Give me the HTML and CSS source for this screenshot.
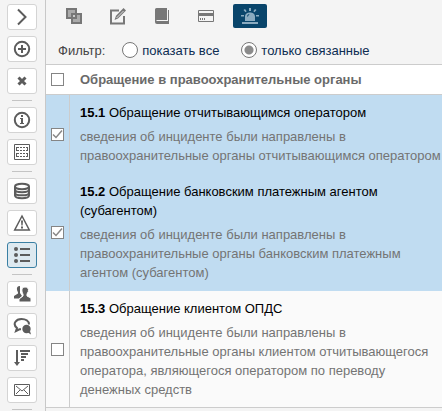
FILE: index.html
```html
<!DOCTYPE html>
<html lang="ru">
<head>
<meta charset="utf-8">
<title>Обращение в правоохранительные органы</title>
<link rel="stylesheet" href="styles.css">
</head>
<body>
<div class="app">
  <nav class="sidebar" aria-label="Разделы">
    <button class="side-btn" type="button" aria-label="Развернуть"><svg width="18" height="18" viewBox="0 0 18 18"><path class="line" d="M5 1.500l7.500 7.500L5 16.500"/></svg></button>
    <button class="side-btn" type="button" aria-label="Добавить"><svg width="18" height="18" viewBox="0 0 18 18"><circle class="line" cx="9" cy="9" r="7.200"/><path class="line" d="M9 5v8M5 9h8"/></svg></button>
    <button class="side-btn" type="button" aria-label="Удалить"><svg width="18" height="18" viewBox="0 0 18 18"><path class="line bold" d="M5.500 5.500l7 7M12.500 5.500l-7 7"/></svg></button>
    <hr class="rule">
    <button class="side-btn" type="button" aria-label="Информация"><svg width="18" height="18" viewBox="0 0 18 18"><circle class="line" cx="9" cy="9" r="7.200"/><path d="M8 4h2v2H8zM7 7h3v5h1v1H7v-1h1V8H7z"/></svg></button>
    <button class="side-btn" type="button" aria-label="Бланк"><svg width="18" height="18" viewBox="0 0 18 18"><path class="line thin" d="M1.500 1.500h15v15h-15z"/><path class="line thin" d="M3 4.500h3M7 4.500h2M10 4.500h2M13 4.500h2M3 7.500h3M7 7.500h2M10 7.500h2M13 7.500h2M3 10.500h3M7 10.500h2M10 10.500h2M13 10.500h2M3 13.500h3M7 13.500h2M10 13.500h2M13 13.500h2M3.500 4v4M14.500 4v4M3.500 10v4M14.500 10v4"/></svg></button>
    <hr class="rule">
    <button class="side-btn" type="button" aria-label="База данных"><svg width="18" height="18" viewBox="0 0 18 18"><ellipse class="line" cx="9" cy="4.500" rx="7" ry="2.700"/><path class="line" d="M2 4.500v9c0 3.500 14 3.500 14 0v-9M2 7.500c0 3.500 14 3.500 14 0M2 10.700c0 3.500 14 3.500 14 0"/></svg></button>
    <button class="side-btn" type="button" aria-label="Предупреждение"><svg width="18" height="18" viewBox="0 0 18 18"><path class="line medium" d="M9 2l7.300 14H1.700z"/><path d="M8 6.500h2l-.4 5H8.400zM8 12.500h2v2H8z"/></svg></button>
    <button class="side-btn side-btn-active" type="button" aria-label="Список"><svg width="18" height="18" viewBox="0 0 18 18"><circle cx="3" cy="3" r="2"/><circle cx="3" cy="9" r="2"/><circle cx="3" cy="15" r="2"/><path d="M7 2h10v2H7zM7 8h10v2H7zM7 14h10v2H7z"/></svg></button>
    <hr class="rule">
    <button class="side-btn" type="button" aria-label="Пользователи"><svg width="18" height="18" viewBox="0 0 18 18"><path d="M7 1C4.500 1 3.500 2.500 4 5l1 2.500v1L1 11v2.500h5l3-2.500-2-3V3z"/><path class="person" d="M12 2c2.500 0 4 1.500 3.300 4.500L14 9v2l4 2v4H6v-3l4-3V9C8.500 7 8 2 12 2z"/></svg></button>
    <button class="side-btn" type="button" aria-label="Сообщения"><svg width="18" height="18" viewBox="0 0 18 18"><path class="line" d="M8 12.300H6.500L3 14l1-3C-1 7 3 2 8.500 2c4 0 7.500 2 7.500 5.500"/><circle cx="13.500" cy="12" r="4.200"/><path d="M14 15l3-1 1 3.500z"/></svg></button>
    <button class="side-btn" type="button" aria-label="Сортировка"><svg width="18" height="18" viewBox="0 0 18 18"><path d="M3 1h2v12h2l-3 4-3-4h2zM7 1h10v2H7zM8 4h7v2H8zM8 7h5v2H8zM8 10h3v2H8z"/></svg></button>
    <button class="side-btn" type="button" aria-label="Почта"><svg width="18" height="18" viewBox="0 0 18 18"><path class="line thin" d="M1.500 3.500h15v11h-15zM3 5l6 5 6-5M3 13l4-4M15 13l-4-4"/></svg></button>
    <hr class="rule">
  </nav>
  <main class="content">
    <div class="toolbar">
      <button class="tool" type="button" aria-label="Копии"><svg width="18" height="18" viewBox="0 0 18 18"><path class="copy" d="M2 2h9v9H2z"/><path class="copy" d="M7 7h9v9H7z"/><path class="copy copy-mid" d="M7 7h4v4H7z"/></svg></button>
      <button class="tool" type="button" aria-label="Изменить"><svg width="18" height="18" viewBox="0 0 18 18"><path class="line" d="M10 3.500H2v13h13V9"/><path d="M14.500 1l2.500 2.500-8 8L5.500 13 7 8.800z"/><path class="glint" d="M7.500 11l7-7"/></svg></button>
      <button class="tool" type="button" aria-label="Справочник"><svg width="18" height="18" viewBox="0 0 18 18"><path d="M3.500 1H14v12H3.500v1H15V3h1v14H4Q2 17 2 15V2.500Q2 1 3.500 1z"/></svg></button>
      <button class="tool" type="button" aria-label="Карта"><svg width="18" height="18" viewBox="0 0 18 18"><path class="line thin" d="M1.500 3.500h15v11h-15z"/><path d="M1 6h16v3H1zM3 11h1v2H3zM5 11h1v2H5zM7 11h1v2H7z"/></svg></button>
      <button class="tool tool-active" type="button" aria-label="Тревога"><svg width="18" height="18" viewBox="0 0 18 18"><path d="M4 14V9.500C4 4 14 4 14 9.500V14zM1 15h16v2H1zM8 1h2v3H8zM2.500 3L4 2l1.700 2.200-1.200 1zM15.500 3L14 2l-1.700 2.200 1.200 1zM0 8h3v1.500H0zM15 8h3v1.500h-3z"/><path class="dark" d="M6 9.500q0-2 2-2.500l.4.800Q7 8.200 7 9.500z"/></svg></button>
    </div>
    <div class="filter" role="radiogroup" aria-labelledby="filter-name">
      <span class="filter-name" id="filter-name">Фильтр:</span>
      <label class="option"><input class="radio" type="radio" name="filter">показать все</label>
      <label class="option"><input class="radio" type="radio" name="filter" checked>только связанные</label>
    </div>
    <table class="list">
      <thead>
        <tr><th class="pick"><input class="check" type="checkbox" aria-label="Выбрать все"></th><th class="heading">Обращение в правоохранительные органы</th></tr>
      </thead>
      <tbody>
        <tr class="selected">
          <td class="pick"><input class="check" type="checkbox" id="item1" checked></td>
          <td class="item"><label class="title" for="item1"><b>15.1</b> Обращение отчитывающимся оператором</label>
            <p class="note">сведения об инциденте были направлены в правоохранительные органы отчитывающимся оператором</p></td>
        </tr>
        <tr class="selected">
          <td class="pick"><input class="check" type="checkbox" id="item2" checked></td>
          <td class="item"><label class="title" for="item2"><b>15.2</b> Обращение банковским платежным агентом (субагентом)</label>
            <p class="note">сведения об инциденте были направлены в правоохранительные органы банковским платежным агентом (субагентом)</p></td>
        </tr>
        <tr>
          <td class="pick"><input class="check" type="checkbox" id="item3"></td>
          <td class="item"><label class="title" for="item3"><b>15.3</b> Обращение клиентом ОПДС</label>
            <p class="note">сведения об инциденте были направлены в правоохранительные органы клиентом отчитывающегося оператора, являющегося оператором по переводу денежных средств</p></td>
        </tr>
      </tbody>
    </table>
  </main>
</div>
</body>
</html>
```
FILE: styles.css
```css
* { box-sizing: border-box; }
body {
  margin: 0;
  background: #f4f4f4;
  font: 13px/19px "Liberation Sans", Arial, sans-serif;
  color: #000;
}
.app { display: flex; min-height: 100vh; }
.sidebar {
  flex: none;
  display: flex;
  flex-direction: column;
  align-items: center;
  gap: 6px;
  width: 46px;
  padding: 4px 1px 0 0;
  border-right: 1px solid #c8c8c8;
}
.side-btn {
  display: flex;
  align-items: center;
  justify-content: center;
  width: 30px;
  height: 26px;
  padding: 0;
  border: 1px solid #d4d4d4;
  border-radius: 3px;
  background: #fff;
}
.side-btn-active { border-color: #3a7fa3; background: #dde9f0; }
.rule { width: 20px; margin: 0; border: 0; border-top: 1px solid #c4c4c4; }
svg { display: block; fill: #5c5c5c; }
.line { fill: none; stroke: #5c5c5c; stroke-width: 2; }
.thin { stroke-width: 1; }
.medium { stroke-width: 1.5; }
.bold { stroke-width: 3; }
.person { stroke: #fff; stroke-width: 1; }
.content { flex: 1; min-width: 0; }
.toolbar { display: flex; gap: 10px; padding: 4px 11px 0; }
.tool {
  display: flex;
  align-items: center;
  justify-content: center;
  width: 34px;
  height: 24px;
  padding: 0;
  border: 0;
  border-radius: 2px;
  background: none;
}
.tool svg { fill: #777; }
.tool .line { stroke: #777; }
.tool .copy { fill: #aaa; stroke: #777; stroke-width: 2; }
.tool .copy-mid { fill: #ccc; }
.tool .glint { stroke: #ddd; stroke-width: 1; }
.tool-active { background: #09456b; }
.tool-active svg { fill: #8aabc0; }
.tool-active .dark { fill: #09456b; }
.filter {
  display: flex;
  align-items: center;
  height: 36px;
  padding: 8px 0 0 12px;
  color: #0d2d52;
}
.filter-name { margin-right: 17px; color: #444; }
.option { display: flex; align-items: center; gap: 4px; margin-right: 22px; }
.radio, .check { appearance: none; margin: 0; background: #fff; }
.radio { width: 16px; height: 16px; border: 1px solid #777; border-radius: 50%; }
.radio:checked { background: radial-gradient(circle, #8b8b8b 4px, #fff 5px); }
.check { display: block; width: 13px; height: 13px; border: 1px solid #858585; }
.check:checked {
  background: #fff url("data:image/svg+xml,%3Csvg xmlns='http://www.w3.org/2000/svg' viewBox='0 0 11 11'%3E%3Cpath d='M1 5.500l3 3 6-7' fill='none' stroke='%23888' stroke-width='1.500'/%3E%3C/svg%3E");
}
.list { width: 100%; border-collapse: separate; border-spacing: 0; background: #fafafa; }
.list th { height: 31px; border: solid #ccc; border-width: 1px 0; background: #fff; text-align: left; color: #6a6a6a; }
.list td { border-bottom: 1px solid #ccc; }
.list .pick { width: 24px; padding: 0 5px; vertical-align: middle; }
.list td.pick { border-right: 1px solid #ccc; }
.list .heading { padding: 0 10px; }
.list .item { padding: 8px 0 8px 10px; }
.selected td { background: #c0dcf1; border-bottom-color: #c0dcf1; }
.title { display: block; }
.note { margin: 5px 0 0; color: #747474; }
```
